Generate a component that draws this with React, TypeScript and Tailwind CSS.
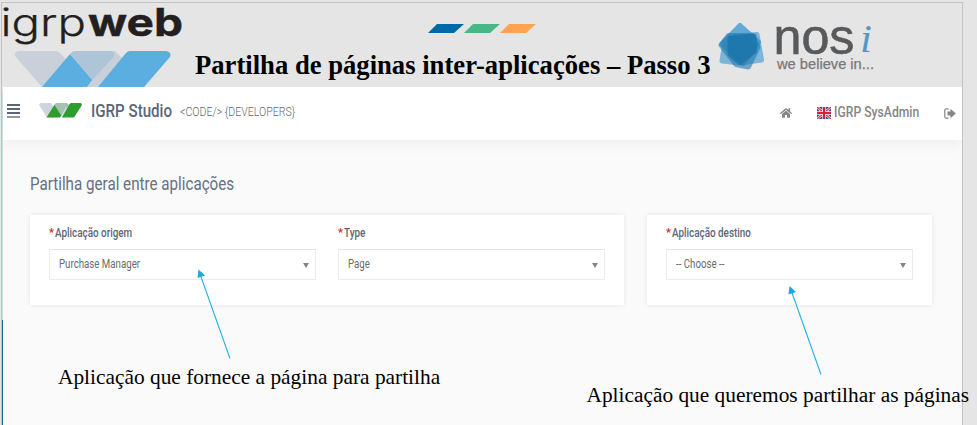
import React from "react";
import { FaHome } from "react-icons/fa";

function IgrpLogo() {
  return (
    <svg className="block h-[84px] w-[190px] overflow-visible" viewBox="3 3 190 84">
      <g fill="#231f20" fontFamily="Inter, sans-serif" fontSize="38">
        <text x="0.500" y="36" fontWeight="300" stroke="#231f20" strokeWidth="0.250" textLength="85.500" lengthAdjust="spacingAndGlyphs">igrp</text>
        <text x="88" y="36" fontWeight="700" stroke="#231f20" strokeWidth="0.400" textLength="95" lengthAdjust="spacingAndGlyphs">web</text>
      </g>
      <path d="M19 51H55Q58 51 60 53L92 87H42L15.500 56.500Q13 52 19 51Z" fill="#c9d0da" />
      <path d="M108 51H115L126 62L98 87H89Z" fill="#c9d0da" />
      <path d="M70 54L92.500 80L87 87H42Z" fill="#5aaee0" />
      <path d="M75 51H110Q116 52 113.500 57L92.500 80L70 54Q72 51 75 51Z" fill="#aec5d7" />
      <path d="M92.500 80L98 87H87Z" fill="#c9d0da" />
      <path d="M130 51H166Q172 52 170 57L144 87H98L126 53Q128 51 130 51Z" fill="#5aaee0" />
    </svg>
  );
}

function NosiLogo() {
  return (
    <svg className="block h-[60px] w-[165px] overflow-visible" viewBox="715 18 165 60">
      <g strokeLinejoin="round" strokeWidth="5">
        <g opacity=".75"><path d="M740 25.500L758.500 42L743 63.500L722 44Z" fill="#3796cf" stroke="#3796cf" /></g>
        <g opacity=".6"><path d="M757 34.500L761.500 60L740 63L722 61L725 42L735 36Z" fill="#3796cf" stroke="#3796cf" /></g>
        <g opacity=".6"><path d="M728.500 35.500L752 36L758 47L748.500 67L736 64.500L721 45Z" fill="#2179b0" stroke="#2179b0" /></g>
        <g opacity=".65"><path d="M730 38L754 36L754.500 51L740 62.500L730 54Z" fill="#156fa6" stroke="#156fa6" /></g>
      </g>
      <text x="773.500" y="54" fill="#58595b" stroke="#58595b" strokeWidth=".6" fontFamily="Liberation Sans, sans-serif" fontSize="50" textLength="81" lengthAdjust="spacingAndGlyphs">nos</text>
      <text x="860" y="52" fill="#5599c3" fontFamily="Liberation Serif, serif" fontStyle="italic" fontSize="39" textLength="12" lengthAdjust="spacingAndGlyphs">i</text>
      <text x="777" y="68.500" fill="#77787b" stroke="#77787b" strokeWidth=".25" fontFamily="Liberation Sans, sans-serif" fontSize="14.500" textLength="97" lengthAdjust="spacingAndGlyphs">we believe in...</text>
    </svg>
  );
}

function StudioMark() {
  return (
    <svg className="block h-[15px] w-[43px]" viewBox="0 0 43 15">
      <path d="M1 0H12L18 7L15 14.500H8L0 2Z" fill="#cfd5de" />
      <path d="M16 1L23 12L21 14.500H7.500Z" fill="#2c9e2e" />
      <path d="M17 0H28L30 2L22.500 13L15.500 2Z" fill="#a4c3b3" />
      <path d="M22.500 12L27 4L29 8L25 14.500H24Z" fill="#d5dae2" />
      <path d="M32 0H42L43 2L35 14.500H23L30.500 1Z" fill="#2c9e2e" />
    </svg>
  );
}

function Flag() {
  return (
    <svg className="block h-[12px] w-[14px]" viewBox="0 0 14 12">
      <path d="M0 0H14V12H0Z" fill="#34469c" />
      <path d="M0 0L14 12M14 0L0 12" stroke="#f3dfe5" strokeWidth="2.600" />
      <path d="M0 0L14 12M14 0L0 12" stroke="#d8364c" strokeWidth="1.100" />
      <path d="M7 0V12M0 6H14" stroke="#f6e6ea" strokeWidth="3.400" />
      <path d="M7 0V12M0 6H14" stroke="#d71f35" strokeWidth="2" />
    </svg>
  );
}

function SignOut() {
  return (
    <svg className="mt-[6px] block h-[11px] w-[12px]" viewBox="0 0 12 11">
      <path d="M4.500 .8H2.300Q.8 .8 .8 2.300V8.700Q.8 10.200 2.300 10.200H4.500" fill="none" stroke="#858585" strokeWidth="1.200" />
      <path d="M3.500 3.500H6.500V.8L11.800 5.500L6.500 10.200V7.500H3.500Z" fill="#858585" />
    </svg>
  );
}

function Field({ label, value, className }: { label: string; value: string; className: string }) {
  return (
    <div className={className}>
      <div className="flex h-[14px] items-center text-[12.500px] leading-[14px] font-medium text-[#5b6676]">
        <span className="w-[6px] text-[11px] font-bold text-[#d9261c]">*</span>
        <span className="origin-left scale-x-[0.79] whitespace-nowrap">{label}</span>
      </div>
      <div className="mt-[9px] flex h-[31px] items-center justify-between border border-[#ececec] border-t-[#e4e4e4] bg-white pr-[6px] pl-[9px]">
        <span className="origin-left scale-x-[0.775] text-[12.500px] whitespace-nowrap text-[#6c6c6c]">{value}</span>
        <span className="mt-[1px] border-x-[3px] border-t-[5px] border-x-transparent border-t-[#858585]" />
      </div>
    </div>
  );
}

export default function App() {
  return (
    <div className="relative h-[425px] w-[977px] overflow-hidden bg-[#e5e5e5] pt-[2px] pl-[1px] font-['Roboto',sans-serif]">
      <div className="flex h-[423px] w-[962px] border-t border-r border-l border-[#c3c3c3]">
        <div className="flex w-px flex-col">
          <div className="h-[87px]" />
          <div className="h-[230px] bg-[#bfe1e5]" />
          <div className="grow bg-[#126f98]" />
        </div>
        <div className="flex min-w-0 grow flex-col">
          <header className="flex h-[84px] shrink-0">
            <IgrpLogo />
            <div className="w-[522px] shrink-0 pt-[21px]">
              <svg className="ml-[235px] block h-[9px] w-[108px]" viewBox="0 0 108 9">
                <path d="M9 0H36L26 9H0Z" fill="#0069a8" />
                <path d="M45 0H72L62 9H36Z" fill="#48b788" />
                <path d="M81 0H108L98 9H72Z" fill="#ffa351" />
              </svg>
              <h1 className="mt-[17px] ml-[2px] font-['Liberation_Serif',serif] text-[26.650px] leading-[30px] font-bold whitespace-nowrap text-black">
                Partilha de páginas inter-aplicações – Passo 3
              </h1>
            </div>
            <div className="pt-[15px]"><NosiLogo /></div>
          </header>

          <nav className="z-10 flex h-[53px] shrink-0 items-start bg-white pt-[15px] pr-[6px] pl-[4px] shadow-[0_3px_14px_rgba(0,0,0,0.06)] [clip-path:inset(0_0_-24px_0)]">
            <div className="mt-[2px] flex w-[13px] flex-col gap-[2px]">
              <span className="h-[2px] bg-[#5a6577]" />
              <span className="h-[2px] bg-[#5a6577]" />
              <span className="h-[2px] bg-[#5a6577]" />
              <span className="h-[2px] bg-[#8e96a1]" />
            </div>
            <div className="mt-[1px] ml-[19px]"><StudioMark /></div>
            <div className="ml-[9px] w-[89px]">
              <span className="block w-max origin-left scale-x-[0.84] text-[18px] leading-[18px] font-medium text-[#5b6577]">IGRP Studio</span>
            </div>
            <div className="w-[120px]">
              <span className="block w-max origin-left scale-x-[0.785] text-[13.500px] leading-[19px] font-light text-[#5f6979]">&lt;CODE/&gt; &#123;DEVELOPERS&#125;</span>
            </div>
            <div className="grow" />
            <FaHome className="mt-[5px] h-[12px] w-[12px] text-[#858585]" />
            <div className="mt-[5px] ml-[25px]"><Flag /></div>
            <div className="ml-[3px] w-[110px]">
              <span className="block w-max origin-left scale-x-[0.812] text-[15px] leading-[21px] font-medium text-[#858585]">IGRP SysAdmin</span>
            </div>
            <SignOut />
          </nav>

          <main className="grow bg-[#fafafa] pt-[34px] pl-[27px]">
            <h2 className="w-max origin-left scale-x-[0.843] text-[18px] leading-[20px] font-normal text-[#667080]">Partilha geral entre aplicações</h2>
            <div className="mt-[21px] flex gap-[23px]">
              <section className="flex h-[90px] w-[594px] gap-[22px] bg-white px-[19px] pt-[11px] shadow-[0_0_5px_rgba(0,0,0,0.09)]">
                <Field label="Aplicação origem" value="Purchase Manager" className="w-[267px]" />
                <Field label="Type" value="Page" className="w-[267px]" />
              </section>
              <section className="h-[90px] w-[285px] bg-white px-[19px] pt-[11px] shadow-[0_0_5px_rgba(0,0,0,0.09)]">
                <Field label="Aplicação destino" value="-- Choose --" className="w-[247px]" />
              </section>
            </div>
          </main>
        </div>
      </div>

      {/* Slide annotations over the form */}
      <svg className="pointer-events-none absolute inset-0 z-20 h-[425px] w-[977px]" viewBox="0 0 977 425">
        <path d="M230 358.500L200 274M821 374.500L791 290" stroke="#24b0e8" strokeWidth="1.100" />
        <path d="M198.500 269.500L205 275.500L197.500 278ZM789.500 286L796 292L788.500 294.500Z" fill="#16a9e5" />
      </svg>
      <p className="absolute top-[365px] left-[58px] z-20 font-['Liberation_Serif',serif] text-[21.380px] leading-[24px] whitespace-nowrap text-black">Aplicação que fornece a página para partilha</p>
      <p className="absolute top-[383px] left-[586.500px] z-20 font-['Liberation_Serif',serif] text-[21.360px] leading-[24px] whitespace-nowrap text-black">Aplicação que queremos partilhar as páginas</p>
    </div>
  );
}
